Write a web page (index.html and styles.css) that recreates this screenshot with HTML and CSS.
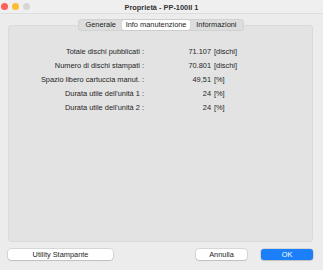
FILE: index.html
```html
<!DOCTYPE html>
<html lang="it">
<head>
  <meta charset="UTF-8">
  <title>Proprietà - PP-100II 1</title>
  <link rel="stylesheet" href="styles.css">
</head>
<body>
<div class="window">
  <div class="titlebar">
    <div class="lights">
      <span class="light red"></span>
      <span class="light yellow"></span>
      <span class="light grey"></span>
    </div>
    <div class="title">Proprietà - PP-100II 1</div>
  </div>

  <div class="content">
    <div class="tabs">
      <span class="tab">Generale</span>
      <span class="tab active">Info manutenzione</span>
      <span class="tab">Informazioni</span>
    </div>

    <div class="panel">
      <div class="info">
        <span class="label">Totale dischi pubblicati :</span>
        <span class="num">71.107</span>
        <span class="unit">[dischi]</span>

        <span class="label">Numero di dischi stampati :</span>
        <span class="num">70.801</span>
        <span class="unit">[dischi]</span>

        <span class="label">Spazio libero cartuccia manut. :</span>
        <span class="num">49,51</span>
        <span class="unit">[%]</span>

        <span class="label">Durata utile dell'unità 1 :</span>
        <span class="num">24</span>
        <span class="unit">[%]</span>

        <span class="label">Durata utile dell'unità 2 :</span>
        <span class="num">24</span>
        <span class="unit">[%]</span>
      </div>
    </div>

    <div class="buttons">
      <button class="btn utility">Utility Stampante</button>
      <div class="spacer"></div>
      <button class="btn cancel">Annulla</button>
      <button class="btn ok">OK</button>
    </div>
  </div>
</div>
</body>
</html>
```

FILE: styles.css
```css
html, body {
  margin: 0;
  padding: 0;
}
body {
  background: #ececec;
  font-family: "Liberation Sans", Arial, sans-serif;
  font-size: 7.4px;
  color: #1e1e1e;
  width: 323px;
  height: 270px;
  overflow: hidden;
}
.window {
  display: flex;
  flex-direction: column;
  height: 270px;
}
.titlebar {
  position: relative;
  height: 13px;
  background: #efefef;
  border-bottom: 1px solid #dedede;
  display: flex;
  align-items: center;
  justify-content: center;
}
.lights {
  position: absolute;
  left: 1px;
  top: 3px;
  display: flex;
  gap: 4px;
}
.light {
  width: 7px;
  height: 7px;
  border-radius: 50%;
  display: block;
}
.red { background: #fe5f57; }
.yellow { background: #febc2e; }
.grey { background: #d6d6d6; }
.title {
  font-weight: bold;
  font-size: 7.4px;
  color: #333333;
  margin-top: 1px;
}
.content {
  flex: 1;
  padding: 5px 10px 0 8px;
  display: flex;
  flex-direction: column;
}
.tabs {
  align-self: center;
  display: flex;
  align-items: center;
  height: 12px;
  padding: 0 1px;
  background: #dddddd;
  border: 1px solid #d2d2d2;
  border-radius: 3px;
  margin-bottom: -6px;
  position: relative;
  z-index: 1;
  box-sizing: border-box;
  width: 166px;
}
.tab {
  height: 10px;
  line-height: 10px;
  padding: 0 5px;
  color: #222222;
  white-space: nowrap;
}
.tab:first-child { padding-left: 6px; }
.tab.active {
  background: #ffffff;
  border-radius: 2px;
  box-shadow: 0 0 1px rgba(0,0,0,0.25);
  width: 71px;
  box-sizing: border-box;
  text-align: center;
  padding: 0;
  margin: 0 1px;
}
.panel {
  height: 217px;
  background: #e3e3e3;
  border: 1px solid #dadada;
  border-radius: 3px;
  box-sizing: border-box;
  padding-top: 18px;
}
.info {
  display: grid;
  grid-template-columns: 135px 64px auto;
  column-gap: 3px;
  grid-auto-rows: 14px;
  align-items: center;
}
.label {
  text-align: right;
}
.num {
  text-align: right;
}
.unit {
  text-align: left;
}
.buttons {
  display: flex;
  align-items: center;
  margin-top: 7px;
  gap: 14px;
}
.spacer { flex: 1; }
.btn {
  font-family: inherit;
  font-size: 7.4px;
  height: 11px;
  line-height: 11px;
  padding: 0;
  border: none;
  border-radius: 3px;
  background: #ffffff;
  color: #1e1e1e;
  box-shadow: 0 0 0 0.5px rgba(0,0,0,0.18), 0 1px 1px rgba(0,0,0,0.1);
}
.utility { width: 105px; }
.cancel { width: 51px; }
.ok {
  width: 52px;
  background: #1b7ff9;
  color: #ffffff;
}
```
